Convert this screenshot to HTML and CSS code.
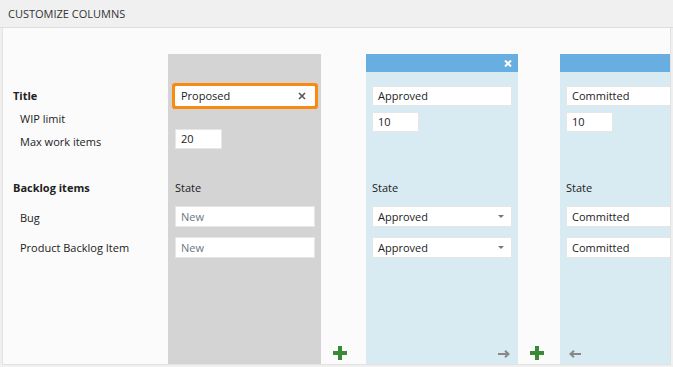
FILE: index.html
```html
<!DOCTYPE html>
<html lang="en">
<head>
  <meta charset="UTF-8" />
  <title>Customize columns</title>
  <link rel="stylesheet" href="styles.css">
</head>
<body>
  <div class="panel-header">CUSTOMIZE COLUMNS</div>
  <div class="panel-body">
    <div class="labels">
      <div class="label strong row-title">Title</div>
      <div class="label sub row-wip">WIP limit</div>
      <div class="label sub row-max">Max work items</div>
      <div class="label strong row-backlog">Backlog items</div>
      <div class="label sub row-bug">Bug</div>
      <div class="label sub row-pbi">Product Backlog Item</div>
    </div>

    <div class="column incoming">
      <div class="column-band"></div>
      <div class="column-body">
        <div class="field title focused">
          <span>Proposed</span>
          <svg class="clear" width="8" height="8" viewBox="0 0 8 8"><path d="M1 1L7 7M7 1L1 7"/></svg>
        </div>
        <div class="limits">
          <div class="field small max">20</div>
        </div>
        <div class="state-label">State</div>
        <div class="field state placeholder">New</div>
        <div class="field state placeholder">New</div>
      </div>
    </div>

    <div class="spacer">
      <svg class="add" width="14" height="14" viewBox="0 0 14 14"><path d="M7 0V14M0 7H14"/></svg>
    </div>

    <div class="column">
      <div class="column-band">
        <svg class="remove" width="8" height="7" viewBox="0 0 8 7"><path d="M1 0.5L7 6.5M7 0.5L1 6.5"/></svg>
      </div>
      <div class="column-body">
        <div class="field title">Approved</div>
        <div class="limits">
          <div class="field small wip">10</div>
        </div>
        <div class="state-label">State</div>
        <div class="field state select">Approved<span class="caret"></span></div>
        <div class="field state select">Approved<span class="caret"></span></div>
        <div class="column-foot right">
          <svg class="move" width="12" height="8" viewBox="0 0 12 8"><path d="M0 4H10.5M7 0.8L10.5 4L7 7.2"/></svg>
        </div>
      </div>
    </div>

    <div class="spacer narrow">
      <svg class="add" width="14" height="14" viewBox="0 0 14 14"><path d="M7 0V14M0 7H14"/></svg>
    </div>

    <div class="column">
      <div class="column-band"></div>
      <div class="column-body">
        <div class="field title">Committed</div>
        <div class="limits">
          <div class="field small wip">10</div>
        </div>
        <div class="state-label">State</div>
        <div class="field state">Committed</div>
        <div class="field state">Committed</div>
        <div class="column-foot">
          <svg class="move" width="12" height="8" viewBox="0 0 12 8"><path d="M12 4H1.5M5 0.8L1.5 4L5 7.2"/></svg>
        </div>
      </div>
    </div>
  </div>
</body>
</html>
```

FILE: styles.css
```css
:root {
  --page-bg: #f0f0f0;
  --panel-bg: #fbfbfb;
  --line: #dedede;
  --text: #222222;
  --gray-col: #d4d4d4;
  --blue-col: #d8eaf2;
  --blue-band: #68aee0;
  --orange: #fb8a10;
  --green: #398a36;
}

* {
  box-sizing: border-box;
}

body {
  margin: 0;
  background-color: var(--page-bg);
  font-family: "Open Sans", "Noto Sans", sans-serif;
  font-size: 11px;
  color: var(--text);
  height: 367px;
  overflow: hidden;
}

.panel-header {
  height: 28px;
  padding: 6px 0 0 8px;
  border-bottom: 1px solid var(--line);
  font-size: 11px;
  color: #333333;
}

.panel-body {
  display: flex;
  align-items: stretch;
  height: 337px;
  margin: 0 2px;
  padding-top: 26px;
  background-color: var(--panel-bg);
  border: 1px solid #e2e2e2;
  border-top: 0;
  overflow: hidden;
}

/* left labels */
.labels {
  flex: 0 0 165px;
  display: flex;
  flex-direction: column;
  padding: 32px 0 0 10px;
}

.label {
  height: 20px;
  line-height: 20px;
}

.label.strong {
  font-weight: bold;
}

.label.sub {
  padding-left: 7px;
}

.row-wip { margin-top: 3px; }
.row-max { margin-top: 3px; }
.row-backlog { margin-top: 26px; }
.row-bug { margin-top: 10px; }
.row-pbi { margin-top: 10px; }

/* board columns */
.column {
  flex: 0 0 152px;
  display: flex;
  flex-direction: column;
  background-color: var(--blue-col);
}

.column.incoming {
  flex-basis: 153px;
  background-color: var(--gray-col);
}

.column-band {
  height: 18px;
  display: flex;
  align-items: center;
  justify-content: flex-end;
  padding-right: 6px;
  background-color: var(--blue-band);
}

.incoming .column-band {
  background-color: transparent;
}

.remove {
  fill: none;
  stroke: #ffffff;
  stroke-width: 2px;
}

.column-body {
  flex: 1;
  display: flex;
  flex-direction: column;
  padding: 14px 0 0 6px;
}

.incoming .column-body {
  padding-left: 7px;
}

.field {
  display: flex;
  align-items: center;
  justify-content: space-between;
  height: 20px;
  padding: 0 5px 1px;
  background-color: #ffffff;
  border: 1px solid #e6e6e6;
  color: var(--text);
  white-space: nowrap;
}

.field.title {
  width: 140px;
}

.column:last-child .field {
  width: 160px;
}

.column:last-child .field.small {
  width: 47px;
}

.field.focused {
  border-radius: 1px;
  border-color: #ffffff;
  box-shadow: 0 0 0 3px var(--orange);
}

.clear {
  fill: none;
  stroke: #555555;
  stroke-width: 1.6px;
  margin-right: 3px;
}

.limits {
  height: 46px;
}

.field.small {
  width: 47px;
}

.field.wip {
  margin-top: 6px;
}

.field.max {
  margin-top: 23px;
}

.state-label {
  height: 20px;
  line-height: 20px;
  margin-top: 26px;
}

.field.state {
  width: 140px;
  height: 21px;
  margin-top: 8px;
}

.field.state + .field.state {
  margin-top: 10px;
}

.field.placeholder {
  color: #6b7781;
}

.caret {
  width: 0;
  height: 0;
  margin-right: 2px;
  border-left: 3px solid transparent;
  border-right: 3px solid transparent;
  border-top: 3px solid #777777;
}

.column-foot {
  margin-top: auto;
  height: 20px;
  display: flex;
  align-items: center;
  padding-left: 3px;
}

.column-foot.right {
  justify-content: flex-end;
  padding: 0 8px 0 0;
}

.move {
  fill: none;
  stroke: #888888;
  stroke-width: 2px;
}

/* gaps with add buttons */
.spacer {
  flex: 0 0 45px;
  display: flex;
  align-items: flex-end;
  padding: 0 0 4px 12px;
}

.spacer.narrow {
  flex-basis: 42px;
}

.add {
  fill: none;
  stroke: var(--green);
  stroke-width: 4px;
}
```
